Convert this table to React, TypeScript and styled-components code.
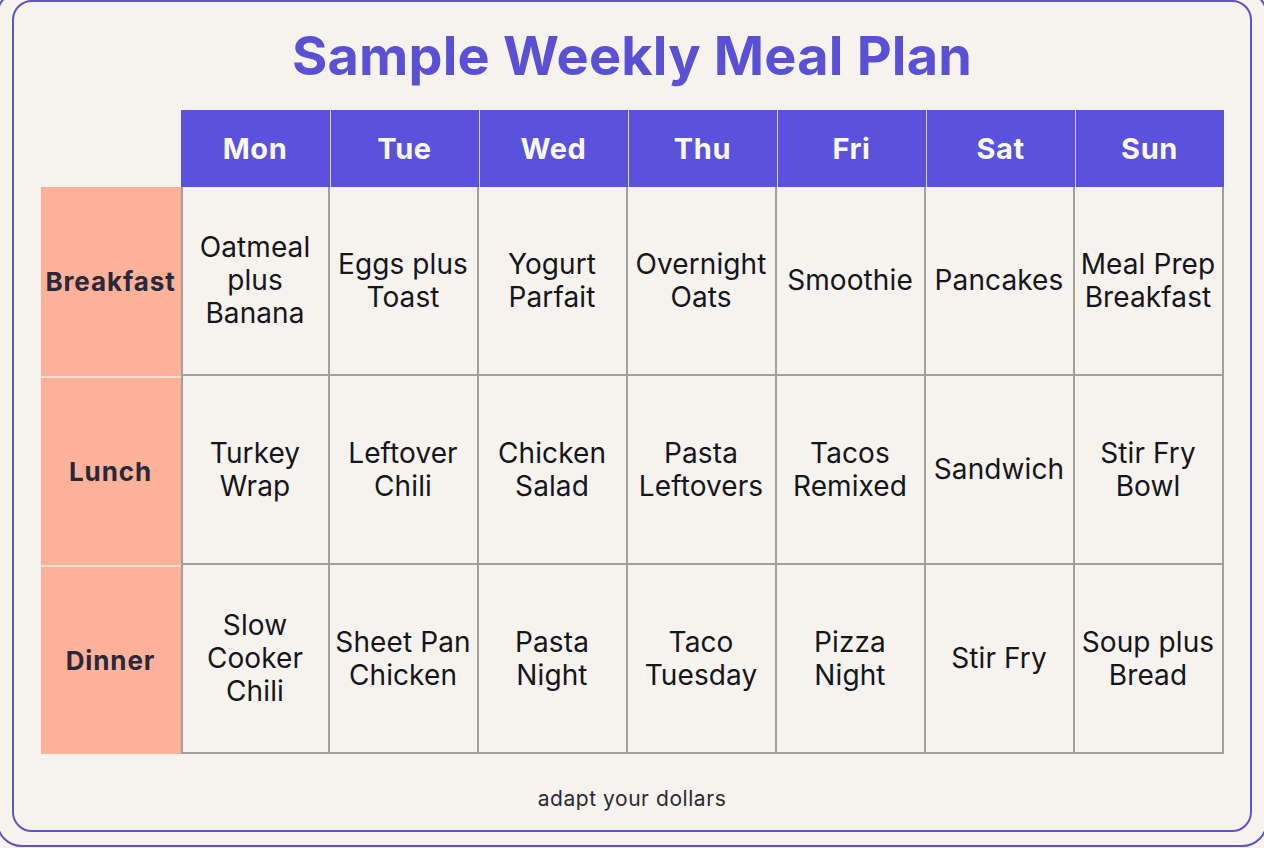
import { FC, Fragment } from 'react';
import styled, { createGlobalStyle } from 'styled-components';

const GlobalStyle = createGlobalStyle`
  html, body {
    margin: 0;
    padding: 0;
    background: #f6f3ef;
    overflow: hidden;
  }
  * {
    box-sizing: border-box;
  }
`;

const Page = styled.div`
  width: 1264px;
  height: 848px;
  overflow: hidden;
  background: #f6f3ef;
`;

const OuterRing = styled.div`
  margin: -10px -4px 0;
  height: 857px;
  border: 2px solid #5b55c4;
  border-radius: 26px;
  padding: 8px 14px 0;
`;

const Frame = styled.div`
  height: 832px;
  border: 2px solid #5b55c4;
  border-radius: 20px;
  background: #f6f3ef;
  padding: 22px 26px 0;
  display: flex;
  flex-direction: column;
  align-items: center;
  font-family: Inter, "Noto Sans", sans-serif;
`;

const Title = styled.h1`
  margin: 0;
  font-size: 54px;
  line-height: 64px;
  font-weight: 700;
  color: #5a50d6;
  letter-spacing: 0.2px;
`;

const Grid = styled.div`
  margin-top: 22px;
  width: 1183px;
  display: grid;
  grid-template-columns: 140px repeat(7, 1fr);
  grid-template-rows: 77px repeat(3, 189px);
`;

const Corner = styled.div``;

const DayCell = styled.div<{ $first?: boolean }>`
  background: #5a52dc;
  color: #fbf9ff;
  font-size: 29px;
  font-weight: 700;
  letter-spacing: 0.6px;
  display: flex;
  align-items: center;
  justify-content: center;
  border-left: ${(p) => (p.$first ? 'none' : '1.5px solid #d9d6f2')};
`;

const MealLabel = styled.div<{ $first?: boolean }>`
  background: #fdb198;
  color: #29283a;
  font-size: 26px;
  font-weight: 700;
  letter-spacing: 0.9px;
  display: flex;
  align-items: center;
  justify-content: center;
  border-top: ${(p) => (p.$first ? 'none' : '2px solid #f5ddd3')};
`;

const MealCell = styled.div<{ $firstCol?: boolean }>`
  color: #15151c;
  font-size: 28px;
  line-height: 33px;
  letter-spacing: 0.1px;
  display: flex;
  align-items: center;
  justify-content: center;
  text-align: center;
  padding: 0 2px;
  border-right: 2px solid #a3a09c;
  border-bottom: 2px solid #a3a09c;
  border-left: ${(p) => (p.$firstCol ? '2px solid #a3a09c' : 'none')};
`;

const Footer = styled.div`
  margin-top: 32px;
  font-size: 21px;
  letter-spacing: 0.55px;
  color: #2a2a33;
`;

const days = ['Mon', 'Tue', 'Wed', 'Thu', 'Fri', 'Sat', 'Sun'];

const meals: { label: string; items: string[][] }[] = [
    {
        label: 'Breakfast',
        items: [
            ['Oatmeal', 'plus', 'Banana'],
            ['Eggs plus', 'Toast'],
            ['Yogurt', 'Parfait'],
            ['Overnight', 'Oats'],
            ['Smoothie'],
            ['Pancakes'],
            ['Meal Prep', 'Breakfast'],
        ],
    },
    {
        label: 'Lunch',
        items: [
            ['Turkey', 'Wrap'],
            ['Leftover', 'Chili'],
            ['Chicken', 'Salad'],
            ['Pasta', 'Leftovers'],
            ['Tacos', 'Remixed'],
            ['Sandwich'],
            ['Stir Fry', 'Bowl'],
        ],
    },
    {
        label: 'Dinner',
        items: [
            ['Slow', 'Cooker', 'Chili'],
            ['Sheet Pan', 'Chicken'],
            ['Pasta', 'Night'],
            ['Taco', 'Tuesday'],
            ['Pizza', 'Night'],
            ['Stir Fry'],
            ['Soup plus', 'Bread'],
        ],
    },
];

const App: FC = () => {
    return (
        <Page>
            <GlobalStyle />
            <OuterRing>
                <Frame>
                    <Title>Sample Weekly Meal Plan</Title>
                    <Grid>
                        <Corner />
                        {days.map((d, i) => (
                            <DayCell key={d} $first={i === 0}>{d}</DayCell>
                        ))}
                        {meals.map((m, r) => (
                            <Fragment key={m.label}>
                                <MealLabel $first={r === 0}>{m.label}</MealLabel>
                                {m.items.map((lines, c) => (
                                    <MealCell key={`${m.label}-${c}`} $firstCol={c === 0}>
                                        <div>
                                            {lines.map((l) => (
                                                <div key={l}>{l}</div>
                                            ))}
                                        </div>
                                    </MealCell>
                                ))}
                            </Fragment>
                        ))}
                    </Grid>
                    <Footer>adapt your dollars</Footer>
                </Frame>
            </OuterRing>
        </Page>
    );
};

export default App;
